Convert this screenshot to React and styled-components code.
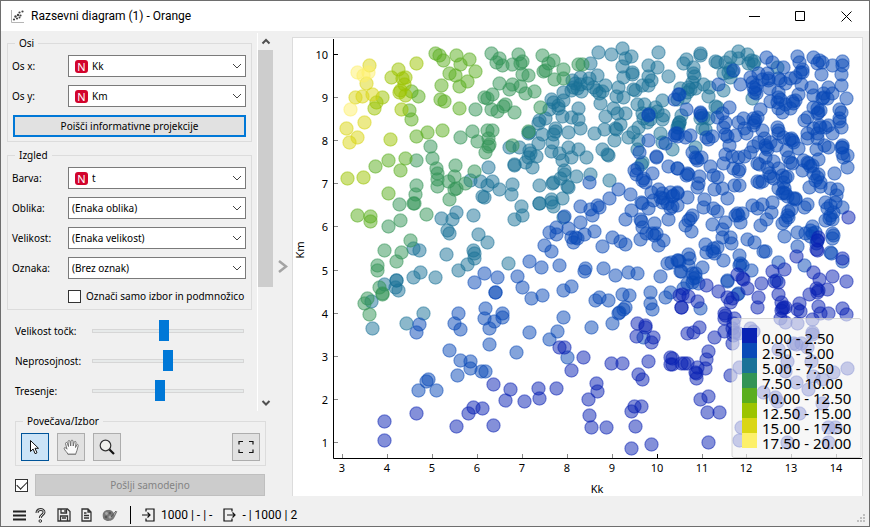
import React, { useState } from "react";
import styled, { createGlobalStyle } from "styled-components";

const GlobalStyle = createGlobalStyle`
  * { box-sizing: border-box; }
  body {
    margin: 0;
    background: #f0f0f0;
    color: #000;
    font: 10px/14px "Noto Sans", "Open Sans", sans-serif;
  }
  button, select, input { font: inherit; color: inherit; }
`;

const Window = styled.div`
  display: flex;
  flex-direction: column;
  min-height: 100vh;
  border: 1px solid #6e6e6e;
  background: #f0f0f0;
`;

const TitleBar = styled.header`
  display: flex;
  align-items: center;
  height: 30px;
  padding-left: 10px;
  background: #fff;
`;

const Title = styled.h1`
  flex: 1;
  margin: 0 0 0 7px;
  font: 400 12px/16px Roboto, "Noto Sans", sans-serif;
`;

const WindowButton = styled.button`
  display: grid;
  place-items: center;
  width: 46px;
  height: 30px;
  padding: 0;
  border: 0;
  background: none;
`;

const Body = styled.main`
  display: flex;
  flex: 1;
`;

const Sidebar = styled.aside`
  display: flex;
  flex-direction: column;
  flex: none;
  width: 272px;
`;

const ScrollArea = styled.div`
  display: flex;
  margin-top: 2px;
`;

const Settings = styled.div`
  flex: 1;
  min-width: 0;
  padding: 3px 5px 9px 6px;
`;

const ScrollBar = styled.div`
  display: flex;
  flex: none;
  flex-direction: column;
  width: 16px;
  border-left: 1px solid #fff;
`;

const ScrollButton = styled.button`
  display: grid;
  place-items: center;
  width: 100%;
  height: 17px;
  padding: 0;
  border: 0;
  background: none;
`;

const ScrollTrack = styled.div`
  flex: 1;
`;

const ScrollThumb = styled.div`
  height: 69%;
  background: #cdcdcd;
`;

const Group = styled.fieldset`
  min-width: 0;
  margin: ${(p) => (p.$inset ? "3px 7px 0 14px" : "0 0 6px")};
  padding: 5px 5px 4px;
  border: 1px solid #dcdcdc;
`;

const GroupTitle = styled.legend`
  margin-left: 2px;
  padding: 0 4px;
  line-height: 14px;
`;

const Rows = styled.div`
  display: grid;
  grid-template-columns: minmax(0, 1fr);
  gap: 8px;
`;

const Field = styled.div`
  display: flex;
  align-items: center;
  height: 22px;
`;

const FieldLabel = styled.label`
  flex: none;
  width: ${(p) => (p.$wide ? "77px" : "56px")};
  margin-left: ${(p) => (p.$wide ? "0" : "-1px")};
`;

const ComboFrame = styled.div`
  display: flex;
  flex: 1;
  align-items: center;
  height: 22px;
  padding: 0 3px;
  border: 1px solid #7a7a7a;
  background: #fff;
`;

const VariableBadge = styled.span`
  width: 13px;
  height: 13px;
  margin: 0 4px 0 3px;
  border-radius: 3px;
  background: #d2042d;
  color: #fff;
  font: 11px/13px "Noto Sans", sans-serif;
  text-align: center;
`;

const Combo = styled.select`
  flex: 1;
  min-width: 0;
  height: 20px;
  padding: 0;
  border: 0;
  outline: 0;
  appearance: none;
  background: transparent;
`;

const DefaultButton = styled.button`
  height: 22px;
  padding: 0;
  border: 2px solid #0078d7;
  background: #e1e1e1;
`;

const CheckRow = styled.label`
  display: flex;
  align-items: center;
  gap: 5px;
  height: 18px;
  margin-left: 55px;
  white-space: nowrap;
`;

const CheckBox = styled.input`
  flex: none;
  display: grid;
  place-items: center;
  width: 13px;
  height: 13px;
  margin: 0;
  appearance: none;
  border: 1px solid #333;
  background: #fff;
  &:checked::before {
    content: "";
    width: 9px;
    height: 5px;
    margin-bottom: 3px;
    border: solid #222;
    border-width: 0 0 1px 1px;
    transform: rotate(-45deg);
  }
`;

const Sliders = styled(Rows)`
  padding: 4px 8px 0;
`;

const Slider = styled.input`
  flex: 1;
  min-width: 0;
  height: 22px;
  margin: 0;
  appearance: none;
  background: transparent;
  &::-webkit-slider-runnable-track {
    height: 4px;
    border: 1px solid #d6d6d6;
    background: #e7eaea;
  }
  &::-webkit-slider-thumb {
    appearance: none;
    width: 10px;
    height: 21px;
    margin-top: -10px;
    background: #0078d7;
  }
`;

const ToolRow = styled.div`
  display: flex;
  gap: 8px;
  > :last-child { margin-left: auto; }
`;

const ToolButton = styled.button`
  display: grid;
  place-items: center;
  width: 28px;
  height: 28px;
  padding: 0;
  border: 1px solid ${(p) => (p.$active ? "#005499" : "#adadad")};
  background: ${(p) => (p.$active ? "#cce4f7" : "#e1e1e1")};
`;

const SendRow = styled.div`
  display: flex;
  align-items: center;
  gap: 7px;
  margin: 8px 8px 0 14px;
`;

const SendButton = styled.button`
  flex: 1;
  height: 22px;
  padding: 0;
  border: 1px solid #bfbfbf;
  background: #cccccc;
  color: #838383;
`;

const Splitter = styled.button`
  display: grid;
  place-items: center;
  flex: none;
  width: 19px;
  padding: 6px 0 0;
  border: 0;
  background: none;
`;

const PlotPanel = styled.section`
  display: flex;
  flex: 1;
  min-width: 0;
  margin: 6px 6px 0 0;
  border: 1px solid #dcdcdc;
  border-bottom: 0;
  background: #fff;
`;

const Plot = styled.svg`
  display: block;
  width: 100%;
  height: 100%;
  font: 11px "Noto Sans", "Open Sans", sans-serif;
`;

const LegendText = styled.text`
  font-size: 15px;
`;

const StatusBar = styled.footer`
  display: flex;
  align-items: center;
  height: 30px;
  padding: 8px 3px 0 11px;
  font: 12px/16px Roboto, "Noto Sans", sans-serif;
`;

const StatusButton = styled.button`
  display: grid;
  place-items: center;
  width: 23px;
  height: 20px;
  padding: 0;
  border: 0;
  background: none;
  &:first-child { width: 15px; margin-right: 2px; }
`;

const StatusDivider = styled.span`
  width: 1px;
  height: 18px;
  margin: 0 11px 0 9px;
  background: #000;
`;

const StatusValue = styled.span`
  display: flex;
  align-items: center;
  gap: 6px;
  margin-right: 11px;
  white-space: nowrap;
`;

const Grip = styled.svg`
  align-self: flex-end;
  margin: 0 0 3px auto;
`;

const LEGEND = [
  ["0.00 - 2.50", "#0a22b4"],
  ["2.50 - 5.00", "#0a4ab8"],
  ["5.00 - 7.50", "#1a7298"],
  ["7.50 - 10.00", "#329455"],
  ["10.00 - 12.50", "#5aae1e"],
  ["12.50 - 15.00", "#9cc400"],
  ["15.00 - 17.50", "#dad614"],
  ["17.50 - 20.00", "#fdf06a"],
];

// Point centres for every colour bin, in the units of the plot's viewBox.
const POINTS = [
  `416,413 384,421 384,440 456,426 468,413 473,407 482,408 637,323 645,325 645,327 636,336 653,337 651,342
  559,347 564,347 583,357 571,370 611,363 622,363 648,361 670,357 670,364 679,295 681,307 638,374 642,379
  493,384 510,389 505,400 524,401 538,388 539,398 556,388 596,383 597,391 588,399 589,415 591,427 606,427
  631,411 634,406 641,406 635,426 631,448 651,444 493,425 681,363 848,217 818,237 817,240 817,250 816,249
  796,256 842,258 813,272 819,279 832,276 846,281 827,289 818,290 817,292 816,288 809,294 772,271 784,269
  778,282 774,281 761,283 737,274 743,279 742,278 747,288 758,297 757,307 778,294 781,302 782,308 785,307
  781,310 783,307 799,303 797,309 800,311 818,306 820,313 828,313 842,308 846,314 706,285 718,291 730,302
  727,297 732,298 682,294 688,296 697,301 681,307 724,313 725,315 724,318 734,318 724,331 733,323 732,328
  734,332 733,335 738,333 732,343 699,327 693,332 687,333 714,337 708,351 706,359 780,318 785,322 797,323
  812,319 812,332 812,334 750,328 753,331 672,358 672,364 684,363 687,363 697,367 695,372 696,373 705,368
  696,378 700,399 708,396 707,412 719,412 708,442 730,375 739,367 763,392 775,397 777,401 778,349 787,361
  796,344 801,343 807,347 811,361 813,376 833,372 847,368 796,382 808,389 822,379 822,403 799,413 741,427
  739,440 787,442 828,427 835,427 828,442 785,371 793,343`,
  `419,324 416,332 458,313 454,323 460,329 474,282 484,273 485,308 484,318 489,328 489,344 449,350 460,360
  470,361 470,368 457,375 481,371 485,371 428,379 426,381 418,390 436,390 648,114 648,115 674,99 678,94
  648,140 665,143 674,135 677,133 656,156 656,157 639,152 652,173 668,166 677,168 637,168 634,170 636,174
  642,180 645,182 643,178 589,182 618,189 609,198 630,194 651,192 658,189 662,193 660,197 663,198 670,192
  672,196 677,193 641,202 653,200 564,216 580,206 590,209 592,215 597,205 599,207 580,222 568,228 556,227
  549,232 556,234 594,231 584,234 575,237 577,238 573,242 571,237 544,245 551,251 602,246 612,237 620,241
  625,244 640,239 625,219 631,210 642,203 648,208 640,219 641,221 642,227 654,223 668,219 662,202 667,203
  672,206 670,208 652,233 654,235 656,233 658,245 663,240 646,233 529,261 541,267 559,265 585,268 584,271
  603,268 615,275 628,272 637,273 660,276 667,263 671,262 677,260 679,261 680,271 497,277 517,276 522,287
  495,292 495,292 531,298 542,295 563,290 571,286 595,300 599,297 608,300 622,294 629,295 650,292 650,303
  652,309 665,297 670,292 625,307 623,309 619,312 618,313 612,323 591,327 563,317 557,331 549,339 567,357
  529,332 502,313 502,317 494,321 516,352 643,337 679,94 718,84 733,70 740,84 766,57 772,62 783,67 797,56
  813,57 799,62 802,69 802,72 800,72 795,77 819,60 822,62 821,74 817,63 832,65 842,61 842,65 841,74 841,85
  846,98 758,73 750,77 752,82 756,85 755,89 754,92 756,93 753,87 767,73 768,78 768,80 762,79 769,88 778,78
  780,80 785,83 790,78 801,84 798,94 811,87 813,95 828,87 823,93 823,97 822,98 827,98 832,93 778,92 778,97
  770,101 777,102 780,99 785,104 792,101 795,100 790,108 782,112 778,108 793,103 760,109 729,107 686,109
  700,112 701,115 700,113 717,117 722,113 723,127 725,122 738,122 743,118 744,128 746,133 753,118 754,122
  753,125 755,120 757,117 762,130 777,127 778,130 778,133 804,120 807,117 817,108 818,112 820,110 817,113
  813,107 839,109 841,112 839,118 841,127 839,121 832,133 819,125 820,127 825,127 813,128 828,125 675,133
  677,136 690,135 685,137 706,137 708,139 712,136 725,134 727,136 735,135 729,145 758,142 764,138 765,145
  766,147 767,149 753,146 770,142 776,145 783,137 791,138 792,140 789,139 793,142 786,150 798,148 807,133
  807,138 817,138 817,133 816,149 824,145 828,147 842,145 842,147 841,147 847,155 843,157 847,167 842,153
  834,173 692,152 695,157 697,160 696,158 701,157 710,166 723,163 725,154 732,156 738,157 744,156 750,152
  733,168 738,171 739,169 757,163 759,164 765,157 773,161 767,167 788,157 790,162 792,163 778,168 803,160
  808,163 807,162 810,166 818,159 802,170 812,165 677,168 687,173 688,174 686,175 699,176 713,175 717,177
  698,183 697,187 714,189 722,188 734,185 739,185 757,181 759,182 762,181 769,173 770,176 773,178 782,175
  785,177 787,176 783,182 778,188 784,188 783,192 782,193 785,193 787,196 795,198 813,173 817,177 815,180
  820,182 809,187 820,186 818,174 830,188 837,189 836,195 825,202 727,198 704,199 687,197 677,192 673,195
  677,205 703,207 713,208 717,211 692,215 688,220 685,225 691,231 690,218 712,224 725,222 722,229 722,237
  730,237 731,243 737,213 738,215 735,215 740,222 742,213 752,205 757,208 762,204 771,212 766,219 760,225
  772,202 788,211 791,209 788,217 782,223 785,220 795,199 793,198 804,207 807,204 787,215 784,236 797,232
  797,246 804,265 812,226 810,230 812,233 810,236 805,233 817,240 816,243 815,232 832,233 833,235 832,238
  830,252 831,253 825,220 830,215 832,219 833,212 829,218 827,208 830,205 842,207 835,202 842,261 747,239
  754,242 763,251 765,251 705,244 713,248 714,253 706,252 712,251 717,247 723,260 739,255 740,263 742,265
  739,265 751,270 778,262 776,280 688,254 689,258 678,260 688,265 681,271 702,267 692,273 695,277 693,278
  692,282 695,273 698,283 687,283 683,288 727,280 727,281 737,294 738,293 700,308`,
  `470,180 480,181 487,185 482,196 441,218 452,219 456,212 473,215 447,230 449,233 446,254 478,234
  487,242 473,250 474,253 474,258 467,264 458,270 435,277 420,272 413,277 413,248 419,250 396,280 396,280
  384,284 395,287 398,290 371,301 372,328 406,323 423,313 590,63 598,52 611,54 622,48 625,58 631,56 622,66
  632,72 632,74 623,77 597,75 580,77 589,78 572,80 573,87 575,83 577,88 580,84 581,91 587,83 571,90 563,92
  593,87 596,90 599,93 602,91 605,85 618,87 633,89 635,90 642,85 648,76 651,80 648,85 648,65 657,67 658,52
  668,76 616,96 623,97 600,103 613,108 605,116 617,113 625,113 551,99 553,102 558,105 558,108 563,100
  549,109 562,116 578,108 571,117 578,119 580,128 568,132 545,118 539,120 538,123 528,133 529,132 555,128
  555,131 553,134 542,134 538,143 552,142 551,151 559,153 568,147 578,149 571,157 586,157 562,160 529,150
  530,153 536,156 528,157 525,162 532,167 519,147 509,147 514,165 514,164 594,133 604,129 615,128 616,129
  620,124 614,140 602,149 608,155 607,154 628,137 633,132 638,127 638,140 637,104 644,104 662,100 655,107
  657,111 663,115 662,119 650,113 642,113 643,118 647,122 650,119 660,133 662,142 672,149 637,149 642,162
  641,164 680,88 679,122 678,127 564,170 564,174 560,178 576,176 590,174 609,180 567,186 568,187 553,182
  552,183 539,185 512,184 511,194 499,189 492,181 488,167 484,197 551,199 562,198 539,203 521,206 522,215
  514,219 539,203 553,206 551,202 508,263 563,217 700,53 700,55 686,59 683,63 693,67 693,73 694,76 715,61
  717,62 725,62 730,57 738,51 738,58 747,54 748,63 751,60 754,61 753,64 730,68 732,71 730,77 723,73 728,72
  692,82 688,87 690,89 687,92 695,88 703,84 709,87 708,96 723,90 777,67 752,98 715,106 717,107 677,99
  684,97 681,115 679,122 678,124 703,117 700,118 708,118 702,128 705,129 695,147 677,127`,
  `430,146 432,158 416,160 436,168 437,173 437,179 437,186 416,185 415,194 455,165 454,176 448,181 454,189
  456,188 465,183 474,171 449,199 460,137 472,131 477,141 487,130 485,152 488,146 475,109 484,97 487,98
  491,53 399,204 413,203 414,203 426,214 400,220 388,226 410,240 384,250 401,252 396,261 377,265 377,270
  379,287 382,294 382,293 367,298 364,303 369,314 499,58 496,62 502,65 518,54 512,64 520,63 522,61 522,74
  528,75 542,55 548,63 553,60 543,71 545,70 563,69 554,79 563,78 578,64 582,64 499,83 512,84 509,89 520,86
  525,93 534,91 492,94 505,104 503,106 497,111 491,109 514,112 540,107 528,131 512,145 492,130 488,138
  489,144`,
  `435,53 439,55 443,60 456,55 460,64 469,59 475,71 449,73 455,75 467,81 459,86 441,85 440,99 444,101
  459,108 411,91 418,96 409,110 411,119 442,130 427,132 416,136 388,160 405,158 400,170 375,166 388,193
  357,215 370,216 370,221`,
  `416,63 398,69 391,77 405,77 402,78 404,84 399,92 400,90 405,95 382,97 376,102 374,108 401,109 390,139
  347,178 363,177`,
  `369,65 366,83 355,97 362,96 372,94 364,122 346,128 357,137 349,142`,
  `357,72 368,72 363,75 350,109`,
].map((bin) => bin.trim().split(/\s+/).map((pair) => pair.split(",").map(Number)));

const PAINT_ORDER = [2, 3, 4, 5, 6, 7, 1, 0];

const X_TICKS = [
  [3, 342], [4, 387], [5, 432], [6, 477], [7, 522], [8, 567],
  [9, 612], [10, 657], [11, 702], [12, 746], [13, 791], [14, 836],
];
const Y_TICKS = [
  [10, 54], [9, 97], [8, 140], [7, 183], [6, 226],
  [5, 270], [4, 313], [3, 356], [2, 399], [1, 442],
];

const Chevron = ({ size = 10, stroke = "#444", d = "M1 3 5 7 9 3", width = 1 }) => (
  <svg width={size} height={size} viewBox="0 0 10 10" fill="none" stroke={stroke} strokeWidth={width} pointerEvents="none">
    <path d={d} />
  </svg>
);

function ComboField({ id, label, value, badge }) {
  return (
    <Field>
      <FieldLabel htmlFor={id}>{label}</FieldLabel>
      <ComboFrame>
        {badge && <VariableBadge>N</VariableBadge>}
        <Combo id={id} defaultValue={value}>
          <option>{value}</option>
        </Combo>
        <Chevron />
      </ComboFrame>
    </Field>
  );
}

function SliderField({ id, label, value }) {
  return (
    <Field>
      <FieldLabel $wide htmlFor={id}>{label}</FieldLabel>
      <Slider id={id} type="range" min="0" max="142" defaultValue={value} />
    </Field>
  );
}

function ScatterPlot() {
  return (
    <Plot viewBox="293 38 569 458" role="img" aria-label="Km / Kk">
      {PAINT_ORDER.map((bin) => (
        <g key={bin} fill={LEGEND[bin][1]} stroke={LEGEND[bin][1]} fillOpacity="0.5" strokeOpacity="0.5">
          {POINTS[bin].map(([x, y], i) => (
            <circle key={i} cx={x + 0.5} cy={y + 0.5} r="6.6" strokeWidth="1.2" />
          ))}
        </g>
      ))}
      <path d="M333.5 39V458.5H862" fill="none" stroke="#000" />
      {X_TICKS.map(([n, x]) => (
        <g key={n}>
          <path d={`M${x + 0.5} 454v4`} stroke={n === 10 ? "#000" : "#888"} />
          <text x={x} y="472" textAnchor="middle">{n}</text>
        </g>
      ))}
      {Y_TICKS.map(([n, y]) => (
        <g key={n}>
          <path d={`M334 ${y + 0.5}h4`} stroke={n === 10 ? "#000" : "#888"} />
          <text x="328" y={y + 5} textAnchor="end">{n}</text>
        </g>
      ))}
      <text x="597" y="493" textAnchor="middle">Kk</text>
      <text transform="translate(304 250) rotate(-90)" textAnchor="middle">Km</text>
      <rect x="732" y="318.5" width="129" height="139" rx="2" fill="#f2f2f2" fillOpacity="0.6" stroke="#c8c8c8" strokeOpacity="0.7" />
      {LEGEND.map(([label, color], i) => (
        <g key={label}>
          <rect x="742" y={328 + 15 * i} width="15" height="15" fill={color} />
          <LegendText x="762" y={344 + 15 * i}>{label}</LegendText>
        </g>
      ))}
    </Plot>
  );
}

export default function App() {
  const [tool, setTool] = useState("select");
  return (
    <Window>
      <GlobalStyle />
      <TitleBar>
        <svg width="13" height="13" viewBox="0 0 13 13">
          <path d="M.5 0v12.500H13" fill="none" stroke="#b5b5b5" />
          <g fill="#444">
            <circle cx="3" cy="9.500" r="1.100" /><circle cx="4.500" cy="6.500" r="1.200" /><circle cx="6" cy="8.500" r="1.100" />
            <circle cx="7" cy="5" r="1.200" /><circle cx="8.500" cy="2.500" r="1.100" /><circle cx="9.500" cy="5.500" r="1.100" />
            <circle cx="11.500" cy="1.500" r="1.100" /><circle cx="8.500" cy="7.500" r="1" />
          </g>
        </svg>
        <Title>Razsevni diagram (1) - Orange</Title>
        <WindowButton aria-label="Minimize">
          <svg width="11" height="11"><path d="M0 5.500h11" stroke="#000" /></svg>
        </WindowButton>
        <WindowButton aria-label="Maximize">
          <svg width="11" height="11"><path d="M.5.5h9v9h-9z" fill="none" stroke="#000" /></svg>
        </WindowButton>
        <WindowButton aria-label="Close">
          <svg width="11" height="11"><path d="m.5.5 10 10m0-10-10 10" stroke="#000" /></svg>
        </WindowButton>
      </TitleBar>

      <Body>
        <Sidebar>
          <ScrollArea>
            <Settings>
              <Group>
                <GroupTitle>Osi</GroupTitle>
                <Rows>
                  <ComboField id="axis-x" label="Os x:" value="Kk" badge />
                  <ComboField id="axis-y" label="Os y:" value="Km" badge />
                  <DefaultButton>Poišči informativne projekcije</DefaultButton>
                </Rows>
              </Group>
              <Group>
                <GroupTitle>Izgled</GroupTitle>
                <Rows>
                  <ComboField id="color" label="Barva:" value="t" badge />
                  <ComboField id="shape" label="Oblika:" value="(Enaka oblika)" />
                  <ComboField id="size" label="Velikost:" value="(Enaka velikost)" />
                  <ComboField id="label" label="Oznaka:" value="(Brez oznak)" />
                  <CheckRow>
                    <CheckBox type="checkbox" />
                    Označi samo izbor in podmnožico
                  </CheckRow>
                </Rows>
              </Group>
              <Sliders>
                <SliderField id="point-size" label="Velikost točk:" value={67} />
                <SliderField id="opacity" label="Neprosojnost:" value={71} />
                <SliderField id="jitter" label="Tresenje:" value={63} />
              </Sliders>
            </Settings>
            <ScrollBar>
              <ScrollButton aria-label="Up"><Chevron d="M1.500 6.500 5 3l3.500 3.500" width={2} stroke="#505050" /></ScrollButton>
              <ScrollTrack><ScrollThumb /></ScrollTrack>
              <ScrollButton aria-label="Down"><Chevron d="M1.500 3 5 6.500 8.500 3" width={2} stroke="#505050" /></ScrollButton>
            </ScrollBar>
          </ScrollArea>

          <Group $inset>
            <GroupTitle>Povečava/Izbor</GroupTitle>
            <ToolRow>
              <ToolButton $active={tool === "select"} onClick={() => setTool("select")} aria-label="Izbor">
                <svg width="12" height="16" viewBox="0 0 12 16">
                  <path d="M1.500 1.500v11l2.600-2.500 2 4.700 1.900-.9-2-4.500h3.500z" fill="#fff" stroke="#111" />
                </svg>
              </ToolButton>
              <ToolButton $active={tool === "pan"} onClick={() => setTool("pan")} aria-label="Premik">
                <svg width="17" height="17" viewBox="0 0 17 17">
                  <path d="M5 15.500c-.4-2-3.500-4-4-6.300.7-1 2-.5 3 1L2.500 4.500c0-1.200 1.500-1.500 2 0l1 3L5 2.500c.2-1.300 1.800-1.300 2 0l.7 4.500.3-5c.3-1.200 1.700-1.200 2 0l.2 5 1-4c.5-1 1.900-.7 1.800.5l-.5 5 1.200-2.600c.6-1 1.800-.4 1.500.8-.7 3-1.500 6.300-2.700 8.800z" fill="#fafafa" stroke="#666" strokeWidth=".9" />
                  <path d="M5 14.500h8l-.7 1.500H5.300z" fill="#888" />
                </svg>
              </ToolButton>
              <ToolButton $active={tool === "zoom"} onClick={() => setTool("zoom")} aria-label="Povečava">
                <svg width="16" height="16" viewBox="0 0 16 16">
                  <circle cx="6.500" cy="6.500" r="5.300" fill="#f1f1ec" stroke="#333" strokeWidth="1.200" />
                  <path d="m10.500 10.500 4.500 4.500" stroke="#111" strokeWidth="2.200" />
                </svg>
              </ToolButton>
              <ToolButton aria-label="Ponastavi pogled">
                <svg width="16" height="14" viewBox="0 0 16 14" fill="none" stroke="#111" strokeWidth="1.200">
                  <path d="M1 4.500V1.500h4M11 1.500h4v3M15 9.500v3h-4M5 12.500H1v-3" />
                </svg>
              </ToolButton>
            </ToolRow>
          </Group>

          <SendRow>
            <CheckBox type="checkbox" defaultChecked aria-label="Pošlji samodejno" />
            <SendButton disabled>Pošlji samodejno</SendButton>
          </SendRow>
        </Sidebar>

        <Splitter aria-label="Skrij nastavitve">
          <svg width="10" height="13" viewBox="0 0 10 13"><path d="m1 1 7 5.500L1 12" fill="none" stroke="#a3a3a3" strokeWidth="2.500" /></svg>
        </Splitter>
        <PlotPanel>
          <ScatterPlot />
        </PlotPanel>
      </Body>

      <StatusBar>
        <StatusButton aria-label="Meni">
          <svg width="13" height="11"><path d="M0 1.500h13M0 5.500h13M0 9.500h13" stroke="#222" strokeWidth="2" /></svg>
        </StatusButton>
        <StatusButton aria-label="Pomoč">
          <svg width="11" height="15" viewBox="0 0 11 15">
            <path d="M2 5c0-4.500 7-4.500 7-.8C9 7 5.300 6.800 5.300 10" fill="none" stroke="#333" strokeWidth="3" />
            <path d="M2 5c0-4.500 7-4.500 7-.8C9 7 5.300 6.800 5.300 10" fill="none" stroke="#eee" strokeWidth="1" />
            <circle cx="5.300" cy="13" r="1.300" fill="#eee" stroke="#333" />
          </svg>
        </StatusButton>
        <StatusButton aria-label="Shrani">
          <svg width="14" height="14" viewBox="0 0 14 14" fill="none" stroke="#333" strokeWidth="1.300">
            <path d="M1 1h9.500L13 3.500V13H1zM4 1v4h5.500V1M3.500 13V8h7v5M8 2v2M5 10h4" />
          </svg>
        </StatusButton>
        <StatusButton aria-label="Poročilo">
          <svg width="11" height="14" viewBox="0 0 11 14" fill="none" stroke="#333" strokeWidth="1.300">
            <path d="M1 1h6l3 3v9H1zM7 1v3h3M3 5h2.500M3 7.500h5M3 10h5" />
          </svg>
        </StatusButton>
        <StatusButton aria-label="Lastnosti prikaza">
          <svg width="16" height="13" viewBox="0 0 16 13">
            <path d="M6 1c4 0 6 2 6 5l2.500-4 .8.500-2.800 5.800C11 11.500 8.500 12 5 12L2 10.500C-.5 7 .5 1 6 1z" fill="#777" />
            <circle cx="4.500" cy="4.500" r="1.400" fill="#aaa" /><circle cx="8" cy="4" r="1.200" fill="#555" />
            <circle cx="4" cy="8" r="1.300" fill="#555" /><circle cx="8" cy="8" r="1.500" fill="#aaa" />
            <path d="m9 8 5-6" stroke="#555" strokeWidth="1" />
          </svg>
        </StatusButton>
        <StatusDivider />
        <StatusValue>
          <svg width="13" height="14" viewBox="0 0 13 14" fill="none" stroke="#111" strokeWidth="1.200">
            <path d="M4 3.500V1h8v12H4v-2.500M0 7h8M5.500 4.500 8 7 5.500 9.500" />
          </svg>
          1000 | - | -
        </StatusValue>
        <StatusValue>
          <svg width="13" height="14" viewBox="0 0 13 14" fill="none" stroke="#111" strokeWidth="1.200">
            <path d="M9 3.500V1H1v12h8v-2.500M4 7h8M9.500 4.500 12 7 9.500 9.500" />
          </svg>
          - | 1000 | 2
        </StatusValue>
        <Grip width="9" height="9" fill="#bfbfbf">
          <path d="M6 0h2v2H6zM3 3h2v2H3zM6 3h2v2H6zM0 6h2v2H0zM3 6h2v2H3zM6 6h2v2H6z" />
        </Grip>
      </StatusBar>
    </Window>
  );
}
